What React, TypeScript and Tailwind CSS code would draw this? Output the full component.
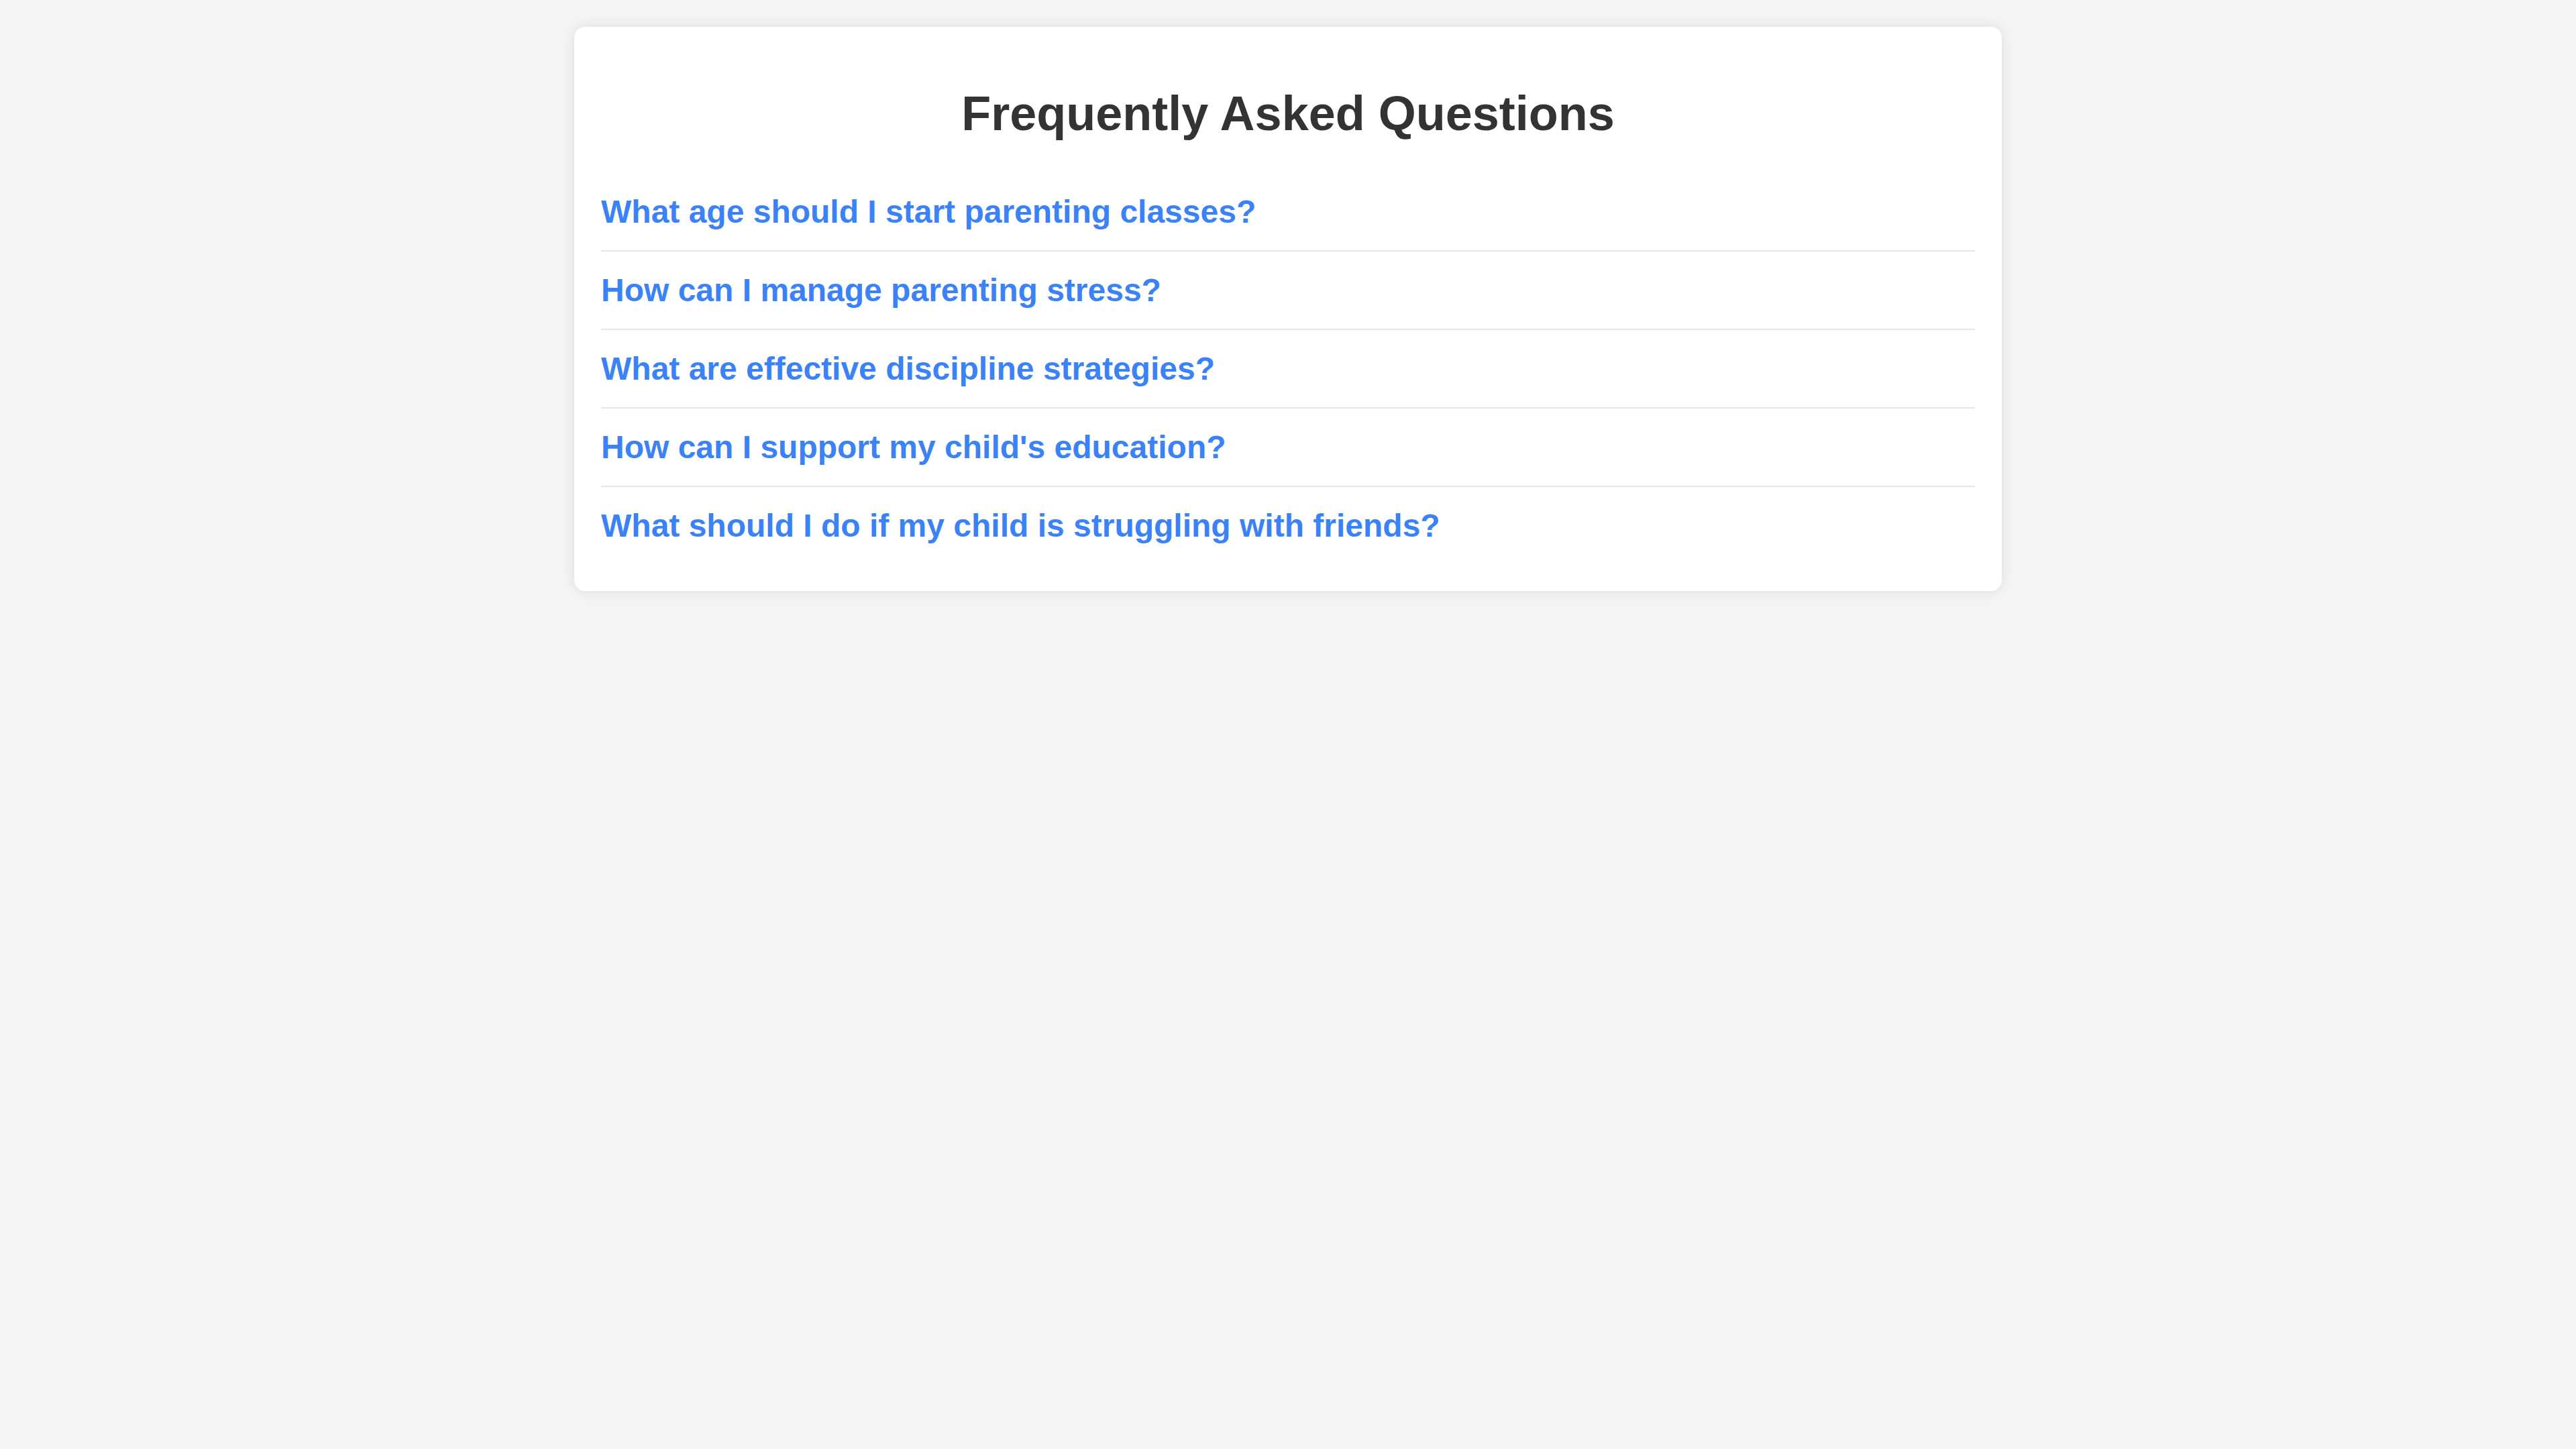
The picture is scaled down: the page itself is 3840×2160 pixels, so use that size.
const faqs = [
  'What age should I start parenting classes?',
  'How can I manage parenting stress?',
  'What are effective discipline strategies?',
  "How can I support my child's education?",
  'What should I do if my child is struggling with friends?',
];

export default function App() {
  return (
    <div className="min-h-screen bg-[#f4f4f4] pt-[40px] font-['Liberation_Sans',Arial,sans-serif] leading-[normal]">
      <div className="mx-auto w-[2128px] rounded-[16px] bg-white p-[40px] shadow-[0_0_20px_rgba(0,0,0,0.1)]">
        <h1 className="my-[48px] text-center text-[72px] leading-[normal] font-bold text-[#333]">
          Frequently Asked Questions
        </h1>
        <div>
          {faqs.map((q, i) => (
            <div
              key={q}
              className={
                i < faqs.length - 1
                  ? 'border-b-2 border-[#e6e6e6] py-[30px]'
                  : 'py-[30px]'
              }
            >
              <h3 className="cursor-pointer text-[48px] leading-[normal] font-bold text-[#3b82f6]">{q}</h3>
            </div>
          ))}
        </div>
      </div>
    </div>
  );
}
